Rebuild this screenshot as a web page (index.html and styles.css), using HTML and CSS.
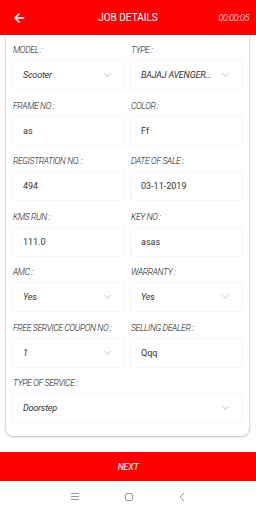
FILE: index.html
```html
<!DOCTYPE html>
<html lang="en">
<head>
    <meta charset="UTF-8">
    <meta name="viewport" content="width=device-width, initial-scale=1.0">
    <title>Job Details</title>
    <link rel="stylesheet" href="styles.css">
</head>
<body>
    <header class="top-bar">
        <svg class="back-icon" width="12" height="12" viewBox="0 0 24 24" fill="none" stroke="white"
             stroke-width="3" stroke-linecap="square">
            <path d="M21 12H5M12 4l-8 8 8 8"/>
        </svg>
        <h1>JOB DETAILS</h1>
        <span class="timer">00:00:05</span>
    </header>

    <div class="card">
        <div class="form-grid">
            <div class="field">
                <label>MODEL :</label>
                <div class="box select"><span>Scooter</span><i class="chev"></i></div>
            </div>
            <div class="field">
                <label>TYPE :</label>
                <div class="box select"><span>BAJAJ AVENGER...</span><i class="chev"></i></div>
            </div>

            <div class="field">
                <label>FRAME NO :</label>
                <div class="box"><span>as</span></div>
            </div>
            <div class="field">
                <label>COLOR :</label>
                <div class="box"><span>Ff</span></div>
            </div>

            <div class="field">
                <label>REGISTRATION NO. :</label>
                <div class="box"><span>494</span></div>
            </div>
            <div class="field">
                <label>DATE OF SALE :</label>
                <div class="box"><span>03-11-2019</span></div>
            </div>

            <div class="field">
                <label>KMS RUN :</label>
                <div class="box"><span>111.0</span></div>
            </div>
            <div class="field">
                <label>KEY NO :</label>
                <div class="box"><span>asas</span></div>
            </div>

            <div class="field">
                <label>AMC :</label>
                <div class="box select"><span>Yes</span><i class="chev"></i></div>
            </div>
            <div class="field">
                <label>WARRANTY :</label>
                <div class="box select"><span>Yes</span><i class="chev"></i></div>
            </div>

            <div class="field">
                <label>FREE SERVICE COUPON NO :</label>
                <div class="box select"><span>1</span><i class="chev"></i></div>
            </div>
            <div class="field">
                <label>SELLING DEALER :</label>
                <div class="box"><span>Qqq</span></div>
            </div>

            <div class="field wide">
                <label>TYPE OF SERVICE :</label>
                <div class="box select"><span>Doorstep</span><i class="chev"></i></div>
            </div>
        </div>
    </div>

    <button class="next-btn">NEXT</button>

    <nav class="nav-bar">
        <svg width="10" height="9" viewBox="0 0 10 9" fill="none" stroke="#999" stroke-width="1">
            <path d="M1 1.5h8M1 4.5h8M1 7.5h8"/>
        </svg>
        <svg width="10" height="10" viewBox="0 0 10 10" fill="none" stroke="#999" stroke-width="1">
            <rect x="1.5" y="1.5" width="7" height="7" rx="1.5"/>
        </svg>
        <svg width="8" height="10" viewBox="0 0 8 10" fill="none" stroke="#999" stroke-width="1">
            <path d="M6 1L2 5l4 4"/>
        </svg>
    </nav>
</body>
</html>
```

FILE: styles.css
```css
* {
    margin: 0;
    padding: 0;
    box-sizing: border-box;
    font-family: Roboto, 'Liberation Sans', sans-serif;
}

body {
    width: 256px;
    height: 512px;
    background: #ffffff;
    display: flex;
    flex-direction: column;
    overflow: hidden;
}

.top-bar {
    height: 35px;
    background: #ff0000;
    color: white;
    display: flex;
    align-items: center;
    padding: 0 7px 0 13px;
    position: relative;
    flex-shrink: 0;
}

.back-icon {
    display: block;
}

.top-bar h1 {
    position: absolute;
    left: 0;
    right: 0;
    text-align: center;
    font-size: 10px;
    font-weight: 400;
    pointer-events: none;
}

.timer {
    margin-left: auto;
    font-size: 9px;
    font-style: italic;
    font-weight: 300;
    letter-spacing: -0.3px;
}

.card {
    margin: 0 7px 0 6px;
    height: 401px;
    background: white;
    border-radius: 0 0 7px 7px;
    box-shadow: 0 0 2px rgba(0, 0, 0, 0.35), 0 1px 3px rgba(0, 0, 0, 0.15);
    padding: 8px 6px 0 7px;
    flex-shrink: 0;
}

.form-grid {
    display: grid;
    grid-template-columns: 111px 111px;
    column-gap: 7px;
    row-gap: 9.5px;
}

.field.wide {
    grid-column: 1 / 3;
}

.field label {
    display: block;
    height: 14px;
    line-height: 14px;
    margin-bottom: 4px;
    font-size: 8.6px;
    font-style: italic;
    font-weight: 300;
    color: #111;
    letter-spacing: -0.35px;
    white-space: nowrap;
}

.box {
    height: 28px;
    background: white;
    border-radius: 2px;
    box-shadow: 0 0 1.5px rgba(0, 0, 0, 0.2);
    display: flex;
    align-items: center;
    padding: 0 10px;
    font-size: 9px;
    color: #333;
}

.box.select span {
    font-style: italic;
    letter-spacing: -0.2px;
}

.chev {
    margin-left: auto;
    margin-right: 4px;
    width: 5px;
    height: 5px;
    border-right: 1px solid #d2d2d2;
    border-bottom: 1px solid #d2d2d2;
    transform: rotate(45deg);
    margin-top: -3px;
}

.next-btn {
    margin-top: 16px;
    height: 29px;
    width: 100%;
    border: none;
    background: #ff0000;
    color: white;
    font-size: 9px;
    font-style: italic;
    letter-spacing: -0.3px;
    flex-shrink: 0;
}

.nav-bar {
    height: 31px;
    display: flex;
    align-items: center;
    justify-content: center;
    gap: 44px;
    flex-shrink: 0;
}

.nav-bar svg {
    display: block;
}
```
